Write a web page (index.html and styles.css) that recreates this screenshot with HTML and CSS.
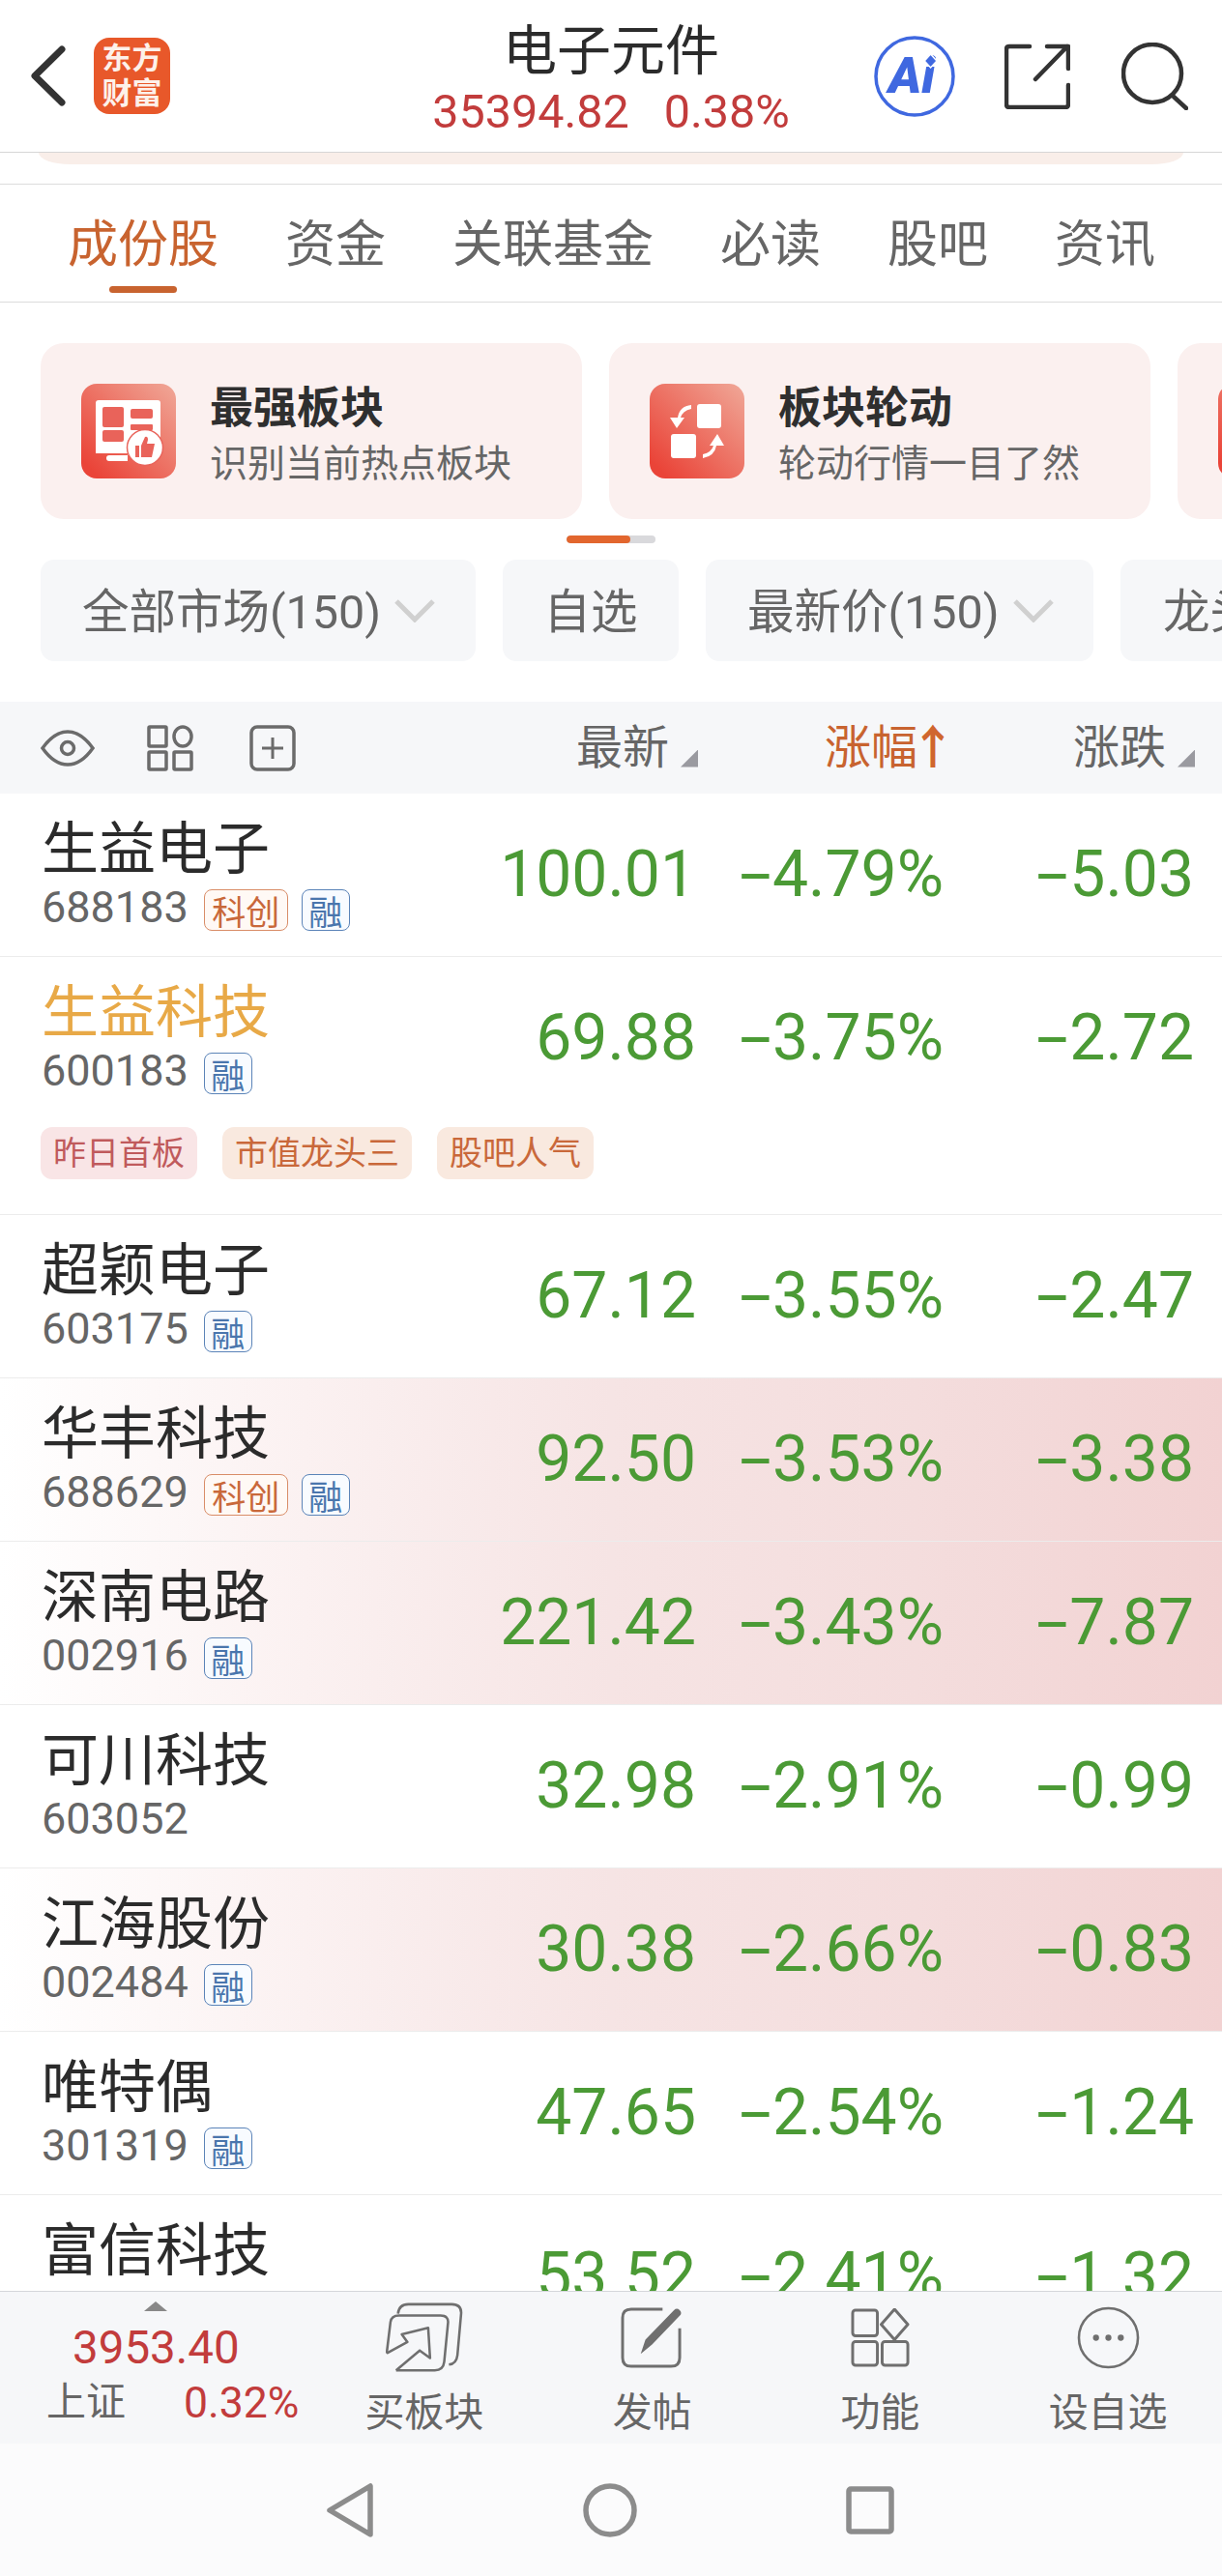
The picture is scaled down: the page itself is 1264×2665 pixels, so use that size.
FILE: index.html
```html
<!DOCTYPE html>
<html lang="zh-CN">
<head>
<meta charset="utf-8">
<title>电子元件</title>
<link rel="stylesheet" href="styles.css">
</head>
<body>
<div class="app">
  <header class="top">
    <div class="top-left">
      <svg class="back" viewBox="0 0 37 63"><path d="M33 4 L5 31.5 L33 59" fill="none" stroke="#333" stroke-width="7" stroke-linecap="round" stroke-linejoin="round"/></svg>
      <div class="logo"><span>东方</span><span>财富</span></div>
    </div>
    <div class="top-mid">
      <div class="title">电子元件</div>
      <div class="sub"><span>35394.82</span><span>0.38%</span></div>
    </div>
    <div class="top-right">
      <svg class="ic-ai" viewBox="0 0 84 84">
        <circle cx="42" cy="42" r="40" fill="none" stroke="#3f68e0" stroke-width="3.5"/>
        <text x="15" y="59" class="ai-text">Ai</text>
        <path d="M58.6 19 L65 26 L58.6 33 L52.2 26 Z" fill="#3f68e0" stroke="#fff" stroke-width="1.5"/>
      </svg>
      <svg class="ic-share" viewBox="0 0 68 68" fill="none" stroke="#333" stroke-width="4.5" stroke-linecap="round" stroke-linejoin="round">
        <path d="M26 3 H5 Q2 3 2 6 V63 Q2 66 5 66 H63 Q66 66 66 63 V43"/>
        <path d="M32 37 L65 3 M44 3 H66 V26"/>
      </svg>
      <svg class="ic-search" viewBox="0 0 69 70" fill="none" stroke="#333" stroke-width="4.5" stroke-linecap="round">
        <circle cx="32" cy="32" r="30"/>
        <path d="M54 56 L67 68"/>
      </svg>
    </div>
  </header>

  <main class="main">
    <div class="peek"></div>
    <nav class="tabs">
      <span class="tab active">成份股</span>
      <span class="tab">资金</span>
      <span class="tab">关联基金</span>
      <span class="tab">必读</span>
      <span class="tab">股吧</span>
      <span class="tab">资讯</span>
    </nav>

    <div class="cards">
      <div class="card">
        <svg class="card-ic" viewBox="0 0 98 98">
          <defs><linearGradient id="g1" x1="0" y1="1" x2="1" y2="0"><stop offset="0.1" stop-color="#ea4438"/><stop offset="1" stop-color="#f0a898"/></linearGradient></defs>
          <rect width="98" height="98" rx="16" fill="url(#g1)"/>
          <path d="M15 20 Q15 17 18 17 H79 Q82 17 82 20 V56 H60 V74 H29 Q26 74 26 77 Q26 80 29 80 H48 V72 H15 Z" fill="#fff"/>
          <rect x="22" y="24" width="22" height="21" rx="2" fill="#e9635a"/>
          <rect x="51" y="26" width="23" height="10" rx="2" fill="#e9635a"/>
          <rect x="22" y="48" width="22" height="12" rx="2" fill="#e9635a"/>
          <rect x="51" y="42" width="23" height="6" rx="1" fill="#e9635a"/>
          <circle cx="66" cy="66" r="18.5" fill="#fff" stroke="#e9635a" stroke-width="1.5"/>
          <path d="M56 64 H60 V76 H56 Z M62 64 L66 55 Q69 54 69 58 L68 62 H76 L73 76 H62 Z" fill="#e9635a"/>
        </svg>
        <div class="card-text"><div class="card-title">最强板块</div><div class="card-sub">识别当前热点板块</div></div>
      </div>
      <div class="card">
        <svg class="card-ic" viewBox="0 0 98 98">
          <defs><linearGradient id="g2" x1="0" y1="1" x2="1" y2="0"><stop offset="0.1" stop-color="#ea4438"/><stop offset="1" stop-color="#f0a898"/></linearGradient></defs>
          <rect width="98" height="98" rx="16" fill="url(#g2)"/>
          <rect x="49" y="21" width="25" height="25" rx="3" fill="#fff"/>
          <rect x="22" y="52" width="26" height="25" rx="3" fill="#fff"/>
          <path d="M43 22 Q31 23 29 35 H21 L28 46 L36 35 H32 Q34 28 43 26 Z" fill="#fff"/>
          <path d="M55 77 Q67 75 69 64 H77 L70 52 L62 64 H66 Q64 71 55 73 Z" fill="#fff"/>
        </svg>
        <div class="card-text"><div class="card-title">板块轮动</div><div class="card-sub">轮动行情一目了然</div></div>
      </div>
      <div class="card">
        <svg class="card-ic" viewBox="0 0 98 98">
          <defs><linearGradient id="g3" x1="0" y1="1" x2="1" y2="0"><stop offset="0.1" stop-color="#ea4438"/><stop offset="1" stop-color="#f0a898"/></linearGradient></defs>
          <rect width="98" height="98" rx="16" fill="url(#g3)"/>
        </svg>
      </div>
    </div>
    <div class="pager"><div class="pager-on"></div></div>

    <div class="filters">
      <div class="filter filter-a"><span>全部市场(150)</span><svg class="chev" viewBox="0 0 42 24"><path d="M2 2 L21 21 L40 2" fill="none" stroke="#d0d0d0" stroke-width="5"/></svg></div>
      <div class="filter filter-b"><span>自选</span></div>
      <div class="filter filter-c"><span>最新价(150)</span><svg class="chev" viewBox="0 0 42 24"><path d="M2 2 L21 21 L40 2" fill="none" stroke="#d0d0d0" stroke-width="5"/></svg></div>
      <div class="filter filter-d"><span>龙头股</span></div>
    </div>

    <div class="thead">
      <div class="thead-icons">
        <svg class="ic-eye" viewBox="0 0 56 38" fill="none" stroke="#6b6b6b" stroke-width="3.5"><path d="M2 19 Q14 2 28 2 Q42 2 54 19 Q42 36 28 36 Q14 36 2 19 Z"/><circle cx="28" cy="19" r="6.5"/></svg>
        <svg class="ic-grid" viewBox="0 0 48 48" fill="none" stroke="#6b6b6b" stroke-width="3.5"><rect x="2" y="2" width="18" height="20" rx="1"/><ellipse cx="37" cy="12" rx="9" ry="10"/><rect x="2" y="28" width="18" height="18" rx="1"/><rect x="28" y="28" width="18" height="18" rx="1"/></svg>
        <svg class="ic-plus" viewBox="0 0 48 48" fill="none" stroke="#6b6b6b" stroke-width="3.5"><rect x="2" y="2" width="44" height="44" rx="6"/><path d="M24 13 V35 M13 24 H35" stroke-width="3"/></svg>
      </div>
      <div class="th">最新<i class="sort"></i></div>
      <div class="th th-on">涨幅<span class="arrow">↑</span></div>
      <div class="th">涨跌<i class="sort"></i></div>
    </div>

    <div class="row">
      <div class="row-main">
        <div class="stock"><div class="name">生益电子</div><div class="code"><span>688183</span><b class="tag tag-k">科创</b><b class="tag tag-r">融</b></div></div>
        <div class="num">100.01</div><div class="num"><span class="minus">-</span>4.79%</div><div class="num"><span class="minus">-</span>5.03</div>
      </div>
    </div>
    <div class="row">
      <div class="row-main">
        <div class="stock"><div class="name name-hi">生益科技</div><div class="code"><span>600183</span><b class="tag tag-r">融</b></div></div>
        <div class="num">69.88</div><div class="num"><span class="minus">-</span>3.75%</div><div class="num"><span class="minus">-</span>2.72</div>
      </div>
      <div class="pills"><span class="pill pill-red">昨日首板</span><span class="pill">市值龙头三</span><span class="pill">股吧人气</span></div>
    </div>
    <div class="row">
      <div class="row-main">
        <div class="stock"><div class="name">超颖电子</div><div class="code"><span>603175</span><b class="tag tag-r">融</b></div></div>
        <div class="num">67.12</div><div class="num"><span class="minus">-</span>3.55%</div><div class="num"><span class="minus">-</span>2.47</div>
      </div>
    </div>
    <div class="row row-heat">
      <div class="row-main">
        <div class="stock"><div class="name">华丰科技</div><div class="code"><span>688629</span><b class="tag tag-k">科创</b><b class="tag tag-r">融</b></div></div>
        <div class="num">92.50</div><div class="num"><span class="minus">-</span>3.53%</div><div class="num"><span class="minus">-</span>3.38</div>
      </div>
    </div>
    <div class="row row-heat">
      <div class="row-main">
        <div class="stock"><div class="name">深南电路</div><div class="code"><span>002916</span><b class="tag tag-r">融</b></div></div>
        <div class="num">221.42</div><div class="num"><span class="minus">-</span>3.43%</div><div class="num"><span class="minus">-</span>7.87</div>
      </div>
    </div>
    <div class="row">
      <div class="row-main">
        <div class="stock"><div class="name">可川科技</div><div class="code"><span>603052</span></div></div>
        <div class="num">32.98</div><div class="num"><span class="minus">-</span>2.91%</div><div class="num"><span class="minus">-</span>0.99</div>
      </div>
    </div>
    <div class="row row-heat">
      <div class="row-main">
        <div class="stock"><div class="name">江海股份</div><div class="code"><span>002484</span><b class="tag tag-r">融</b></div></div>
        <div class="num">30.38</div><div class="num"><span class="minus">-</span>2.66%</div><div class="num"><span class="minus">-</span>0.83</div>
      </div>
    </div>
    <div class="row">
      <div class="row-main">
        <div class="stock"><div class="name">唯特偶</div><div class="code"><span>301319</span><b class="tag tag-r">融</b></div></div>
        <div class="num">47.65</div><div class="num"><span class="minus">-</span>2.54%</div><div class="num"><span class="minus">-</span>1.24</div>
      </div>
    </div>
    <div class="row">
      <div class="row-main">
        <div class="stock"><div class="name">富信科技</div></div>
        <div class="num">53.52</div><div class="num"><span class="minus">-</span>2.41%</div><div class="num"><span class="minus">-</span>1.32</div>
      </div>
    </div>
  </main>

  <footer class="bar">
    <div class="index">
      <i class="caret"></i>
      <div class="index-val">3953.40</div>
      <div class="index-line"><span class="index-name">上证</span><span class="index-pct">0.32%</span></div>
    </div>
    <div class="act">
      <div class="act-box">
        <svg class="ic-buy" viewBox="0 0 82 73" fill="none" stroke="#6f6f6f" stroke-width="2.6" stroke-linejoin="round">
          <path d="M13 11 Q14 1 24 1 H70 Q80 1 80 10 L76 55 Q75 64 67 65"/>
          <path d="M1 53 L5 20 Q6 13 14 13 H58 Q67 13 66 21 L62 62 Q61 71 52 71 H11"/>
          <path d="M1 53 L23 41 L17 33 L45 26 L47 58 L36 50 L11 71"/>
        </svg>
      </div>
      <span class="act-label">买板块</span>
    </div>
    <div class="act">
      <div class="act-box">
        <svg class="ic-edit" viewBox="0 0 66 64" fill="none" stroke="#6f6f6f" stroke-width="3">
          <path d="M44 2 H11 Q2 2 2 11 V53 Q2 62 11 62 H53 Q62 62 62 53 V22"/>
          <path d="M21 49 L26 34 L56 3 Q59 0 62 3 Q65 6 62 9 L33 39 Z" fill="#6f6f6f" stroke="none"/>
        </svg>
      </div>
      <span class="act-label">发帖</span>
    </div>
    <div class="act">
      <div class="act-box">
        <svg class="ic-func" viewBox="0 0 62 62" fill="none" stroke="#6f6f6f" stroke-width="3">
          <rect x="2" y="2" width="26" height="27" rx="3"/>
          <path d="M46 1 L60 17 L46 33 L32 17 Z" stroke-linejoin="round"/>
          <rect x="2" y="35" width="26" height="25" rx="3"/>
          <rect x="33" y="35" width="27" height="25" rx="3"/>
        </svg>
      </div>
      <span class="act-label">功能</span>
    </div>
    <div class="act">
      <div class="act-box">
        <svg class="ic-more" viewBox="0 0 66 66" fill="none" stroke="#6f6f6f" stroke-width="2.6">
          <circle cx="33" cy="33" r="31"/>
          <circle cx="20" cy="33" r="3.2" fill="#6f6f6f" stroke="none"/>
          <circle cx="33" cy="33" r="3.2" fill="#6f6f6f" stroke="none"/>
          <circle cx="46" cy="33" r="3.2" fill="#6f6f6f" stroke="none"/>
        </svg>
      </div>
      <span class="act-label">设自选</span>
    </div>
  </footer>

  <div class="sysnav">
    <svg class="sys-back" viewBox="0 0 48 56" fill="none" stroke="#8c8c8c" stroke-width="5.5" stroke-linejoin="round"><path d="M45 3 V53 L3 28 Z"/></svg>
    <svg class="sys-home" viewBox="0 0 56 56" fill="none" stroke="#8c8c8c" stroke-width="5.5"><circle cx="28" cy="28" r="25"/></svg>
    <svg class="sys-recent" viewBox="0 0 50 50" fill="none" stroke="#8c8c8c" stroke-width="5.5" stroke-linejoin="round"><rect x="3" y="3" width="44" height="44" rx="2"/></svg>
  </div>
</div>
</body>
</html>
```

FILE: styles.css
```css
* { box-sizing: border-box; }
html, body { margin: 0; padding: 0; background: #fff; }
body { font-family: Roboto, "Noto Sans CJK SC", sans-serif; color: #2b2b2b; }
svg { display: block; flex: none; }

.app { width: 1264px; height: 2665px; display: flex; flex-direction: column; overflow: hidden; }

/* top bar */
.top { flex: none; height: 158px; display: grid; grid-template-columns: 1fr auto 1fr; align-items: center; border-bottom: 1px solid #d6d6d6; background: #fff; }
.top-left { display: flex; align-items: center; padding-left: 31px; gap: 29px; }
.back { width: 37px; height: 63px; }
.logo { width: 79px; height: 79px; border-radius: 16px; background: #e8582a; color: #fdf1ea; display: flex; flex-direction: column; align-items: center; justify-content: center; font-size: 31px; line-height: 36px; font-weight: 700; }
.top-mid { text-align: center; padding-top: 5px; }
.title { font-size: 56px; line-height: 70px; color: #2b2b2b; }
.sub { display: flex; gap: 36px; font-size: 48.5px; line-height: 56px; color: #c23c3c; }
.top-right { display: flex; justify-content: flex-end; align-items: center; gap: 53px; padding-right: 35px; }
.ic-ai { width: 84px; height: 84px; margin-right: -2px; }
.ai-text { font-family: Roboto, sans-serif; font-size: 52px; font-weight: 900; font-style: italic; fill: #3f68e0; }
.ic-share { width: 68px; height: 68px; }
.ic-search { width: 69px; height: 70px; }

/* scrolling area */
.main { flex: 1; min-height: 0; overflow: hidden; }
.peek { height: 12px; margin: 0 40px 20px; background: #f9eee9; border-radius: 0 0 32px 32px / 0 0 12px 12px; }

.tabs { height: 123px; display: flex; align-items: center; gap: 69px; padding-left: 70px; border-top: 1px solid #dcdcdc; border-bottom: 1px solid #dcdcdc; }
.tab { position: relative; font-size: 52px; line-height: 60px; color: #666; white-space: nowrap; margin-top: 5px; }
.tab.active { color: #c8632f; height: 100%; display: flex; align-items: center; margin-top: 0; padding-top: 5px; }
.tab.active::after { content: ""; position: absolute; left: 43px; bottom: 9px; width: 70px; height: 7px; border-radius: 4px; background: #c8632f; }

.cards { display: flex; gap: 28px; margin-top: 42px; padding-left: 42px; }
.card { flex: none; width: 560px; height: 182px; border-radius: 24px; background: #fbf0ef; display: flex; align-items: center; gap: 35px; padding-left: 42px; }
.card-ic { width: 98px; height: 98px; }
.card-text { padding-top: 6px; }
.card-title { font-size: 45px; line-height: 54px; font-weight: 700; color: #2f2f2f; }
.card-sub { font-size: 39px; line-height: 46px; margin-top: 7px; color: #666; white-space: nowrap; }

.pager { width: 92px; height: 8px; margin: 17px 0 0 586px; border-radius: 4px; background: #d9d9dc; overflow: hidden; }
.pager-on { width: 66px; height: 8px; border-radius: 4px; background: #e2662e; }

.filters { display: flex; gap: 28px; margin-top: 17px; padding-left: 42px; }
.filter { flex: none; height: 105px; border-radius: 14px; background: #f6f7f9; display: flex; align-items: center; font-size: 48.5px; color: #666; white-space: nowrap; }
.filter span { margin-bottom: 5px; }
.filter-a { width: 450px; padding-left: 43px; gap: 14px; }
.filter-b { width: 182px; justify-content: center; }
.filter-c { width: 401px; padding-left: 43px; gap: 14px; }
.filter-d { width: 300px; padding-left: 44px; }
.chev { width: 42px; height: 24px; }

/* table */
.thead { height: 95px; margin-top: 42px; background: #f6f7f9; display: grid; grid-template-columns: 300px 378px 256px 258px; padding: 0 28px 0 44px; align-items: center; }
.thead-icons { display: flex; align-items: center; }
.ic-eye { width: 56px; height: 38px; margin-left: -2px; }
.ic-grid { width: 48px; height: 48px; margin-left: 54px; }
.ic-plus { width: 48px; height: 48px; margin-left: 58px; }
.th { display: flex; justify-content: flex-end; align-items: flex-end; gap: 12px; font-size: 48px; line-height: 56px; color: #666; }
.th-on { color: #c8632f; gap: 0; }
.arrow { width: 29px; text-align: center; font-weight: 700; text-indent: -8px; white-space: nowrap; color: #d0662e; }
.sort { width: 18px; height: 18px; margin-bottom: 8px; background: #9a9aa0; clip-path: polygon(100% 0, 100% 100%, 0 100%); }

.row { border-bottom: 1px solid #ececec; }
.row-heat { background: linear-gradient(to right, #fff 0%, #fbf1f1 25%, #f6e4e4 50%, #f4dddd 75%, #f2d2d2 100%); }
.row-main { height: 168px; display: grid; grid-template-columns: 300px 376px 256px 259px; padding: 0 29px 0 44px; align-items: center; }
.stock { align-self: start; padding-top: 28px; margin-left: -1px; }
.name { font-size: 59px; line-height: 60px; color: #2b2b2b; white-space: nowrap; }
.name-hi { color: #e8a947; }
.code { display: flex; align-items: center; gap: 14px; margin-top: 7px; height: 44px; font-size: 45px; color: #666; }
.code span { margin-right: 2px; }
.tag { flex: none; height: 43px; display: flex; align-items: center; justify-content: center; border-radius: 8px; font-size: 35px; font-weight: 400; border: 1px solid; margin-top: 7px; }
.tag-k { width: 87px; color: #c9683a; border-color: #d98d68; background: #fff9f5; }
.tag-r { width: 50px; color: #4a76ad; border-color: #5b84b8; background: #f8fbff; }
.num { text-align: right; font-size: 66px; line-height: 76px; color: #4b9a35; white-space: nowrap; }
.minus { display: inline-block; width: 0.52em; text-align: left; transform: scaleX(1.8); transform-origin: 0 50%; }

.pills { display: flex; gap: 26px; margin-top: 8px; padding: 0 0 36px 42px; }
.pill { height: 54px; padding: 0 13px; border-radius: 12px; font-size: 34px; line-height: 54px; background: #f9e9df; color: #c9683a; white-space: nowrap; }
.pill-red { background: #f9e5e6; color: #c05a5c; }

/* bottom action bar */
.bar { flex: none; height: 158px; display: grid; grid-template-columns: 321px repeat(4, 1fr); background: #f6f7f9; border-top: 1px solid #d4d6da; }
.index { position: relative; padding: 35px 0 0 48px; }
.caret { position: absolute; left: 149px; top: 10px; width: 24px; height: 10px; background: #888; clip-path: polygon(50% 0, 100% 100%, 0 100%); }
.index-val { font-size: 47.5px; line-height: 46px; color: #c23c3c; margin-left: 27px; }
.index-line { display: flex; align-items: center; margin-top: 8px; }
.index-name { font-size: 41px; line-height: 52px; color: #666; width: 142px; margin-top: -2px; }
.index-pct { font-size: 44.5px; line-height: 52px; color: #c23c3c; }
.act { display: flex; flex-direction: column; align-items: center; padding-top: 11px; }
.act-box { height: 73px; display: flex; align-items: center; justify-content: center; }
.ic-buy { width: 80px; height: 73px; }
.ic-edit { width: 65px; height: 63px; }
.ic-func { width: 61px; height: 61px; }
.ic-more { width: 65px; height: 65px; }
.act-label { font-size: 41px; line-height: 48px; margin-top: 17px; color: #666; }

/* system nav */
.sysnav { flex: none; height: 137px; background: #fbfbfc; display: flex; align-items: center; padding-left: 338px; }
.sys-back { width: 48px; height: 56px; }
.sys-home { width: 56px; height: 56px; margin-left: 217px; }
.sys-recent { width: 50px; height: 50px; margin-left: 216px; }
```
